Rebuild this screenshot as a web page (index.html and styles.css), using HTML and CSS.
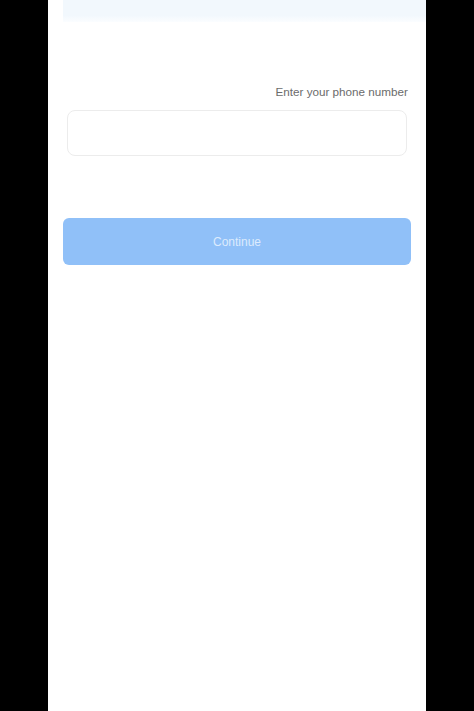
FILE: index.html
```html
<!DOCTYPE html>
<html lang="en">
<head>
<meta charset="utf-8">
<title>Phone sign in</title>
<link rel="stylesheet" href="styles.css">
</head>
<body>
<div class="screen">
  <div class="topbar"></div>
  <form class="form">
    <label class="label" for="phone">Enter your phone number</label>
    <input class="input" id="phone" type="tel">
    <button class="btn" type="button">Continue</button>
  </form>
</div>
</body>
</html>
```
FILE: styles.css
```css
html, body {
  margin: 0;
  padding: 0;
  background: #000;
  height: 100%;
}
body {
  font-family: "Liberation Sans", Arial, sans-serif;
}
.screen {
  width: 378px;
  height: 711px;
  margin-left: 48px;
  background: #fff;
  display: flex;
  flex-direction: column;
}
.topbar {
  height: 22px;
  margin-left: 15px;
  background: linear-gradient(#f2f8fd 70%, #fbfdff);
}
.form {
  display: flex;
  flex-direction: column;
  padding: 0 15px;
}
.label {
  align-self: flex-end;
  margin-top: 63px;
  margin-right: 3px;
  font-size: 11.7px;
  line-height: 14px;
  color: #6b6b6b;
}
.input {
  margin: 11px 4px 0;
  height: 46px;
  box-sizing: border-box;
  border: 1px solid #ececec;
  border-radius: 8px;
  background: #fff;
  outline: none;
}
.btn {
  margin-top: 62px;
  height: 47px;
  border: none;
  border-radius: 6px;
  background: #90c0f8;
  color: #dcebfd;
  font-family: "Liberation Sans", Arial, sans-serif;
  font-size: 12px;
  padding-top: 2px;
}
```
